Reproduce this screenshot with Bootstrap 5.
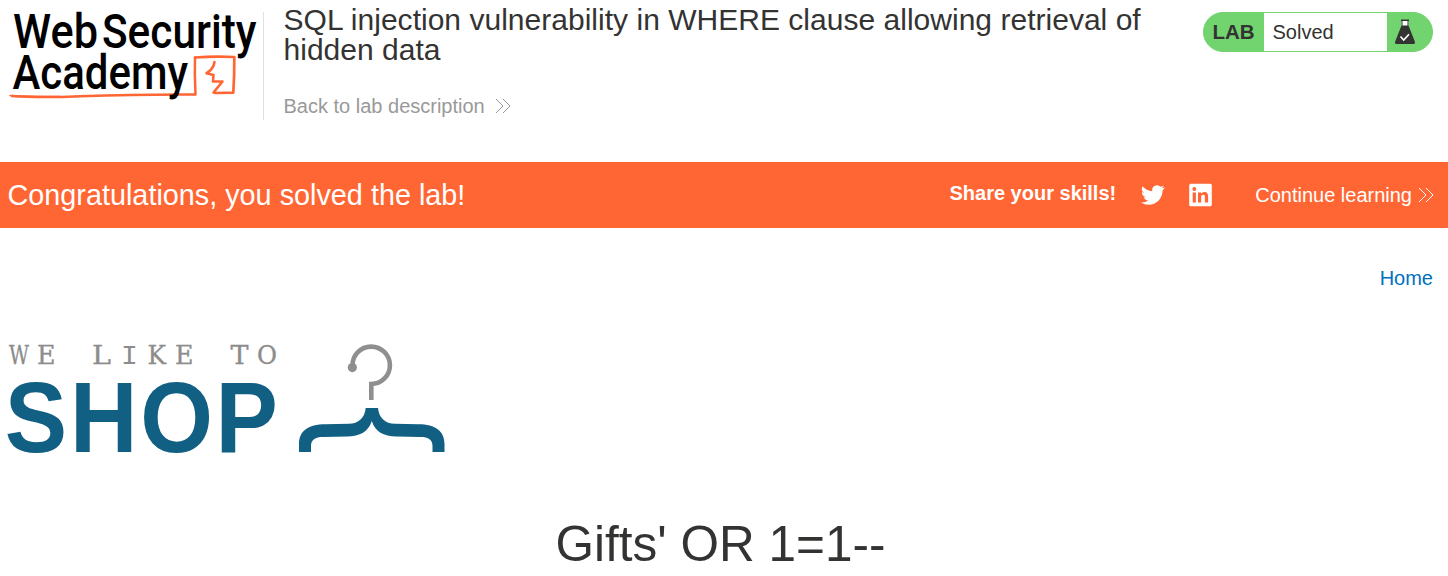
<!DOCTYPE html>
<html lang="en">
<head>
<meta charset="utf-8">
<meta name="viewport" content="width=device-width, initial-scale=1">
<title>SQL injection vulnerability in WHERE clause allowing retrieval of hidden data</title>
<link rel="stylesheet" href="https://cdn.jsdelivr.net/npm/bootstrap@5.3.0/dist/css/bootstrap.min.css">
<style>
body{font-family:"Liberation Sans",Arial,sans-serif;color:#333332;font-size:20px;line-height:1.2;height:576px;overflow:hidden}
svg{display:block;flex:none;overflow:visible}
a{text-decoration:none}
.lab-header{height:162px;padding:12px 15px 0 8px}
.lab-title{border-left:1px solid #e0e0e0;height:108px;margin-left:5px;padding-left:19.5px;width:900px}
.lab-title h2{font-size:30px;line-height:30px;font-weight:400;letter-spacing:.02px;margin:-7px 0 29px}
.back-link{color:#999;gap:10px}
.lab-status{width:230px;height:40px;border:1px solid #72d46e;border-radius:20px;background:#72d46e}
.lab-status strong{width:60px;padding-left:8.5px;font-size:20.5px}
.lab-status p{width:123px;padding-left:8.5px;background:#fff;height:38px}
.solved-banner{background:#f63;height:66px;padding:0 14px 0 7.500px}
.solved-banner h4{font-size:28.8px;font-weight:400}
.share-group{gap:24px}
.share-group strong{margin-right:1px}
.continue-link{margin-left:19px;gap:6px}
.home-nav{height:102px;padding:38px 15px 0}
.home-nav a{color:#0071bc}
.gifts-title{font-size:49.5px;font-weight:400;line-height:56px;margin:56px 7px 0 0}
</style>
</head>
<body class="m-0 bg-white">
<header class="lab-header d-flex align-items-start">
  <svg width="250" height="92" viewBox="8 12 250 92" role="img" aria-label="Web Security Academy">
    <g fill="none" stroke="#f63" stroke-linejoin="round" stroke-linecap="round">
      <path d="M12 96 Q40 98 80 96.200 Q140 94.200 195.500 94.500 Q194.500 75 195 57.500" stroke-width="2.500"/>
      <path d="M10 95.400Q30 96.500 60 96.400" stroke-width="1.500"/>
      <path d="M195 57.500 Q214 56 234.300 57 Q234.500 75 233.300 92.700 L215 93" stroke-width="2.700"/>
      <path d="M214.500 62 Q213.500 69 206.500 73.200 L213.500 75 L213 81.500 L222.500 81.500 L213.500 92.500" stroke-width="2.600"/>
    </g>
    <g font-family="Roboto, sans-serif" font-weight="500" font-size="47.500" fill="#000">
      <text x="13" y="48" textLength="85" lengthAdjust="spacingAndGlyphs">Web</text>
      <text x="102" y="48" textLength="154.500" lengthAdjust="spacingAndGlyphs">Security</text>
      <text x="12.500" y="89" textLength="175.500" lengthAdjust="spacingAndGlyphs">Academy</text>
    </g>
  </svg>
  <div class="lab-title">
    <h2>SQL injection vulnerability in WHERE clause allowing retrieval of hidden data</h2>
    <a class="back-link d-inline-flex align-items-center" href="#">Back to lab description
      <svg width="16" height="16" viewBox="0 0 16 16" fill="none" stroke="#999"><path d="M1 1 8 8 1 15M8 1 15 8 8 15"/></svg>
    </a>
  </div>
  <div class="lab-status d-flex align-items-center ms-auto overflow-hidden">
    <strong>LAB</strong><p class="m-0 d-flex align-items-center">Solved</p>
    <svg class="ms-2" width="20" height="26" viewBox="0 0 20 26">
      <path d="M6.500 2h7v6h-7z" fill="#fff"/>
      <path d="M6 .500h8v1.500H6zM6.500 1.500h1v5h-1zM12.500 1.500h1v5h-1zM6.500 6.500h7L20 23q.500 2-1.500 2H1.500Q-.500 25 0 23z" fill="#333332"/>
      <path d="m5.500 17.500 3.200 3.500 5.300-5.800" fill="none" stroke="#fff" stroke-width="1.600"/>
    </svg>
  </div>
</header>
<section class="solved-banner d-flex align-items-center text-white">
  <h4 class="m-0">Congratulations, you solved the lab!</h4>
  <div class="share-group d-flex align-items-center ms-auto">
    <strong class="mb-1">Share your skills!</strong>
    <svg width="24" height="24" viewBox="0 0 24 24" fill="#fff"><path d="M23.500 4.570a10 10 0 0 1-2.820.770 4.960 4.960 0 0 0 2.160-2.720c-.950.550-2 .950-3.120 1.180a4.920 4.920 0 0 0-8.380 4.480A13.900 13.900 0 0 1 1.640 3.160a4.920 4.920 0 0 0 1.520 6.570 4.900 4.900 0 0 1-2.230-.610v.060a4.920 4.920 0 0 0 3.950 4.830 5 5 0 0 1-2.210.080 4.940 4.940 0 0 0 4.600 3.420A9.870 9.870 0 0 1 0 19.540a14 14 0 0 0 7.550 2.210c9.050 0 14-7.500 14-13.980 0-.210 0-.420-.020-.630a9.940 9.940 0 0 0 2.420-2.570z"/></svg>
    <svg width="23" height="24" viewBox="0.500 0 23 24"><rect x=".7" y=".7" width="22.600" height="22.600" rx="1.600" fill="#fff"/><path d="M4.200 9.400h3.200v10.200H4.200zM9.500 9.400h3.100v1.400q1-1.700 3.100-1.700c3.200 0 3.900 2.100 3.900 4.900v5.600h-3.200v-5c0-1.200 0-2.800-1.700-2.800s-2 1.300-2 2.700v5.100H9.500z" fill="#f63"/><circle cx="5.800" cy="6" r="1.900" fill="#f63"/></svg>
    <a class="continue-link text-white d-flex align-items-center" href="#">Continue learning
      <svg width="16" height="16" viewBox="0 0 16 16" fill="none" stroke="#fff"><path d="M1 1 8 8 1 15M8 1 15 8 8 15"/></svg>
    </a>
  </div>
</section>
<nav class="home-nav text-end"><a href="#">Home</a></nav>
<main>
  <svg class="ms-2" width="440" height="130" viewBox="8 330 440 130" role="img" aria-label="We like to shop">
    <g font-family="DejaVu Serif, serif" font-size="26" fill="#8c8c8c" stroke="#8c8c8c" stroke-width=".35">
      <text x="9" y="364" textLength="20" lengthAdjust="spacingAndGlyphs">W</text>
      <text x="37" y="364" textLength="18.500" lengthAdjust="spacingAndGlyphs">E</text>
      <text x="92" y="364" textLength="19" lengthAdjust="spacingAndGlyphs">L</text>
      <text x="121" y="364" font-family="Liberation Mono, monospace" font-size="28" stroke="none">I</text>
      <text x="147.500" y="364" textLength="18.500" lengthAdjust="spacingAndGlyphs">K</text>
      <text x="175" y="364" textLength="18.500" lengthAdjust="spacingAndGlyphs">E</text>
      <text x="230.500" y="364" textLength="18" lengthAdjust="spacingAndGlyphs">T</text>
      <text x="257" y="364" textLength="20" lengthAdjust="spacingAndGlyphs">O</text>
    </g>
    <text transform="translate(0 452) scale(.935 1)" x="5.200 75 150 230.500" y="0" font-family="Liberation Sans, sans-serif" font-weight="700" font-size="100" fill="#115f83">SHOP</text>
    <path d="M352.500 367v-1.500A18.700 18.700 0 1 1 371.300 384V400" fill="none" stroke="#8f8f90" stroke-width="4.600"/>
    <circle cx="352.300" cy="367.600" r="4.600" fill="#8f8f90"/>
    <path d="M365.700 408h12.300c1 10 7 15.700 17 15.700l23 .500c18 0 26.500 7 26.500 20v7.800h-12v-5.500c0-7-4-9.500-12-9.500l-24-.500c-13 0-21.500-5-24.700-15.500-3.300 10.500-11.700 15.500-24.700 15.500l-24 .500c-8 0-12.100 2.500-12.100 9.500v5.500h-12v-7.800c0-13 8.500-20 26.700-20l23-.500c10 0 16-5.700 17-15.700z" fill="#115f83"/>
  </svg>
  <h1 class="gifts-title text-center">Gifts' OR 1=1--</h1>
</main>
<script src="https://cdn.jsdelivr.net/npm/bootstrap@5.3.0/dist/js/bootstrap.bundle.min.js"></script>
</body>
</html>
